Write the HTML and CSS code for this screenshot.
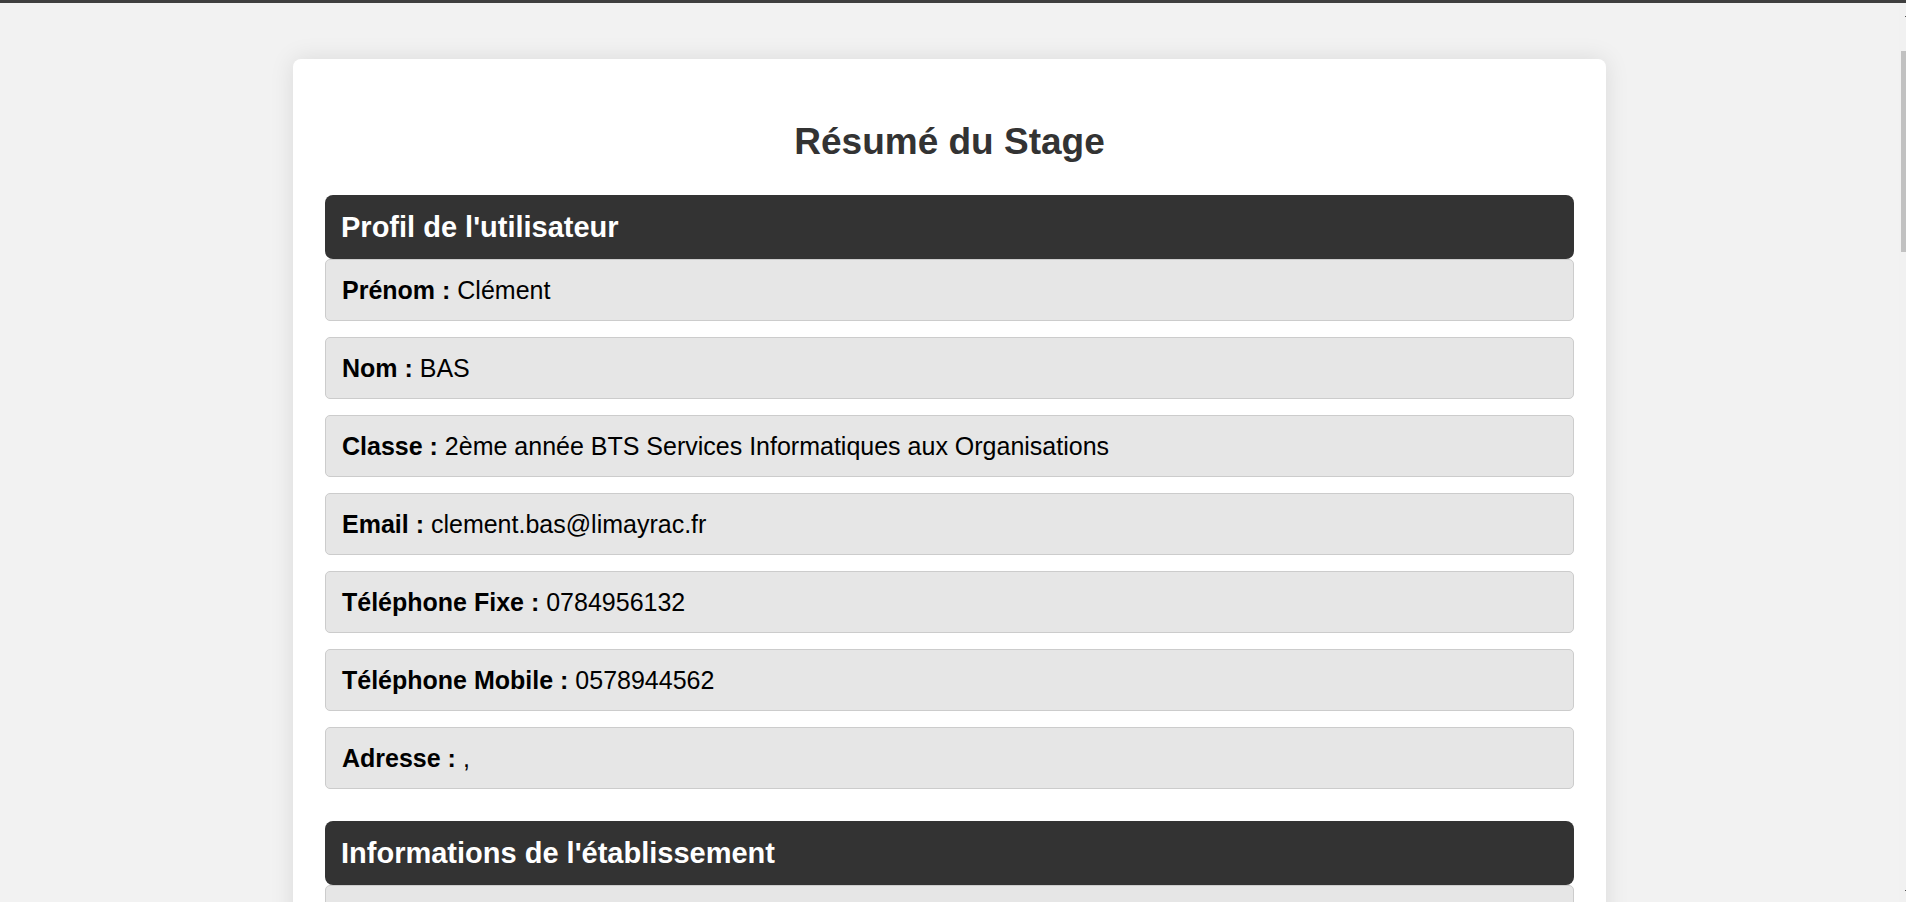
FILE: index.html
```html
<!DOCTYPE html>
<html lang="fr">
<head>
  <meta charset="utf-8">
  <title>Résumé du Stage</title>
  <link rel="stylesheet" href="styles.css">
</head>
<body>
  <header class="topbar"></header>
  <div class="viewport">
    <main class="card">
      <h1 class="card-title">Résumé du Stage</h1>
      <section class="section">
        <h2 class="section-title">Profil de l'utilisateur</h2>
        <div class="rows">
          <p class="row"><strong>Prénom :</strong> Clément</p>
          <p class="row"><strong>Nom :</strong> BAS</p>
          <p class="row"><strong>Classe :</strong> 2ème année BTS Services Informatiques aux Organisations</p>
          <p class="row"><strong>Email :</strong> clement.bas@limayrac.fr</p>
          <p class="row"><strong>Téléphone Fixe :</strong> 0784956132</p>
          <p class="row"><strong>Téléphone Mobile :</strong> 0578944562</p>
          <p class="row"><strong>Adresse :</strong> ,</p>
        </div>
      </section>
      <section class="section">
        <h2 class="section-title">Informations de l'établissement</h2>
        <div class="rows">
          <p class="row"></p>
        </div>
      </section>
    </main>
    <div class="scrollbar" aria-hidden="true">
      <span class="scroll-arrow"></span>
      <span class="scroll-thumb"></span>
      <span class="scroll-arrow scroll-arrow-down"></span>
    </div>
  </div>
</body>
</html>
```

FILE: styles.css
```css
* {
  box-sizing: border-box;
}

body {
  margin: 0;
  height: 100vh;
  display: flex;
  flex-direction: column;
  overflow: hidden;
  background: #f2f2f2;
  color: #000;
  font-family: "Liberation Sans", Arial, sans-serif;
  font-size: 25px;
  line-height: 28px;
}

.topbar {
  flex: none;
  height: 3px;
  background: #3f3f3f;
}

.viewport {
  flex: 1;
  min-height: 0;
  display: flex;
  align-items: flex-start;
  overflow: hidden;
}

.card {
  flex: 1;
  max-width: 1313px;
  margin: 56px auto;
  padding: 32px;
  background: #fff;
  border-radius: 8px;
  box-shadow: 0 0 24px rgba(0, 0, 0, 0.1);
}

.card-title {
  margin: 30px 0 32px;
  color: #333;
  font-size: 37px;
  line-height: 42px;
  text-align: center;
}

.section {
  margin-bottom: 32px;
}

.section-title {
  margin: 0;
  padding: 16px;
  background: #333;
  border-radius: 8px;
  color: #fff;
  font-size: 29px;
  line-height: 32px;
}

.rows {
  display: flex;
  flex-direction: column;
  gap: 16px;
}

.row {
  min-height: 62px;
  margin: 0;
  padding: 16px;
  background: #e6e6e6;
  border: 1px solid #ccc;
  border-radius: 5px;
}

.scrollbar {
  align-self: stretch;
  width: 7px;
  padding: 13px 0 11px;
  display: flex;
  flex-direction: column;
  align-items: flex-end;
  background: #f1f1f1;
}

.scroll-arrow {
  width: 1px;
  height: 1px;
  background: #505050;
}

.scroll-thumb {
  width: 5px;
  height: 201px;
  margin-top: 34px;
  background: #c1c1c1;
}

.scroll-arrow-down {
  margin-top: auto;
}
```
